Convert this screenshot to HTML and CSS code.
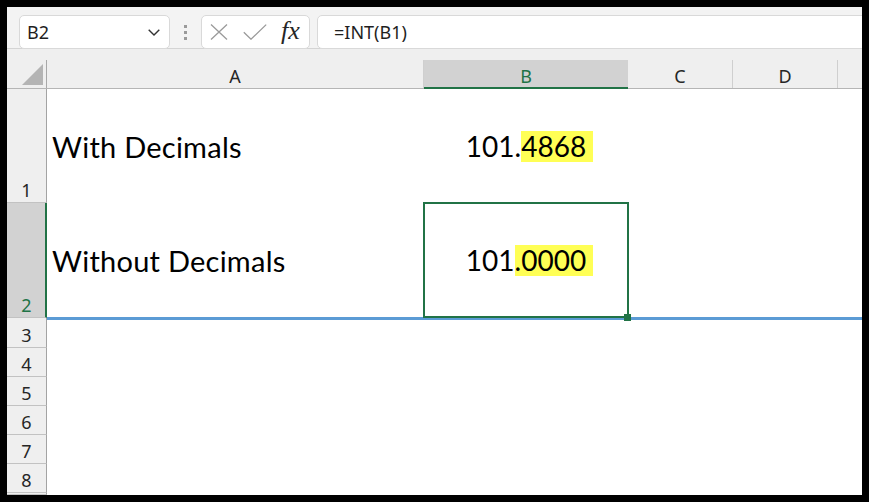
FILE: index.html
```html
<!DOCTYPE html>
<html>
<head>
<meta charset="utf-8">
<link rel="stylesheet" href="styles.css">
</head>
<body>
<div class="frame">
  <div class="toolbar">
    <div class="namebox">
      <span class="nb-text">B2</span>
      <svg class="chev" viewBox="0 0 12 7"><path d="M0.7 0.7 L6 6 L11.3 0.7" fill="none" stroke="#333" stroke-width="1.4"/></svg>
    </div>
    <div class="grip"><i></i><i></i><i></i></div>
    <div class="fxbox">
      <svg class="ic-x" viewBox="0 0 18 16"><path d="M1 0.5 L17 15.5 M17 0.5 L1 15.5" fill="none" stroke="#9a9a9a" stroke-width="1.3"/></svg>
      <svg class="ic-check" viewBox="0 0 24 16"><path d="M0.8 8.2 L8 15.2 L23.2 0.6" fill="none" stroke="#9a9a9a" stroke-width="1.3"/></svg>
      <span class="fx">fx</span>
    </div>
    <div class="formula">=INT(B1)</div>
  </div>
  <div class="colhead">
    <div class="corner"><svg class="tri" viewBox="0 0 21 21"><path d="M21 0 L21 21 L0 21 Z" fill="#b4b4b4"/></svg></div>
    <div class="ch">A</div>
    <div class="ch sel">B</div>
    <div class="ch">C</div>
    <div class="ch">D</div>
    <div class="ch last"></div>
  </div>
  <div class="grid">
    <div class="rh">1</div>
    <div class="cell txt">With Decimals</div>
    <div class="cell num">101.<span class="hl">4868</span></div>
    <div class="cell"></div>
    <div class="cell"></div>
    <div class="cell"></div>

    <div class="rh rsel">2</div>
    <div class="cell txt r2">Without Decimals</div>
    <div class="cell num r2 active">101<span class="hl">.0000</span></div>
    <div class="cell r2"></div>
    <div class="cell r2"></div>
    <div class="cell r2"></div>

    <div class="rh">3</div><div class="cell span5"></div>
    <div class="rh">4</div><div class="cell span5"></div>
    <div class="rh">5</div><div class="cell span5"></div>
    <div class="rh">6</div><div class="cell span5"></div>
    <div class="rh">7</div><div class="cell span5"></div>
    <div class="rh">8</div><div class="cell span5"></div>
    <div class="rh"></div><div class="cell span5"></div>
  </div>
</div>
</body>
</html>
```
FILE: styles.css
```css
* { box-sizing: border-box; margin: 0; padding: 0; }
html, body { background: #000; }
body { padding: 7px; width: 869px; height: 502px; overflow: hidden; }

.frame {
  width: 855px; height: 488px; background: #fff; overflow: hidden;
  display: flex; flex-direction: column;
  font-family: "Noto Sans", sans-serif;
}

/* formula bar */
.toolbar {
  flex: none; height: 42px; background: #f3f3f3;
  border-bottom: 1px solid #d4d4d4;
  display: flex; align-items: flex-start; padding: 8px 0 0 12px;
}
.namebox {
  width: 151px; height: 34px; background: #fff;
  border: 1px solid #d9d9d9; border-radius: 5px;
  display: flex; align-items: center; padding-left: 7px;
  font-size: 18px; color: #1f1f1f;
}
.nb-text { flex: 1; }
.chev { width: 12px; height: 7px; margin-right: 9px; }
.grip {
  width: 31px; height: 34px; display: flex; flex-direction: column;
  align-items: center; justify-content: center; gap: 3px;
}
.grip i { display: block; width: 3px; height: 3px; background: #9a9a9a; }
.fxbox {
  width: 109px; height: 34px; background: #fff;
  border: 1px solid #d9d9d9; border-radius: 5px;
  display: flex; align-items: center; padding-left: 8px;
}
.ic-x { width: 18px; height: 16px; }
.ic-check { width: 24px; height: 16px; margin-left: 15px; }
.fx {
  margin-left: 14px; font-family: "Liberation Serif", serif; font-style: italic;
  font-size: 26px; color: #262626; line-height: 1; margin-top: -2px;
}
.formula {
  flex: 1; height: 34px; margin-left: 7px; margin-right: -10px;
  background: #fff; border: 1px solid #d9d9d9; border-radius: 5px 0 0 5px;
  display: flex; align-items: center; padding-left: 16px;
  font-size: 18px; color: #1f1f1f;
}

/* column header */
.colhead {
  flex: none; height: 40px; background: #efefef;
  border-bottom: 1px solid #b5b5b5; padding-top: 11px;
  display: grid; grid-template-columns: 40px 377px 204px 105px 105px 1fr;
}
.corner {
  border-right: 1px solid #a8a8a8;
  display: flex; align-items: flex-end; justify-content: flex-end; padding: 0 3px 3px 0;
}
.tri { width: 21px; height: 21px; }
.ch {
  display: flex; align-items: center; justify-content: center;
  font-size: 18px; color: #262626; border-right: 1px solid #cfcfcf;
  padding-top: 3px;
}
.ch.sel {
  background: #d2d2d2; color: #217346; border-right: none;
  box-shadow: inset 0 -1px 0 #217346, 0 1px 0 #217346;
}
.ch.last { border-right: none; }

/* grid */
.grid {
  flex: 1; display: grid;
  grid-template-columns: 40px 377px 204px 105px 105px 1fr;
  grid-template-rows: 114px 115px 30px 29px 29px 29px 29px 29px 1fr;
}
.rh {
  background: #efefef; border-right: 1px solid #a3a3a3; border-bottom: 1px solid #c2c2c2;
  display: flex; align-items: flex-end; justify-content: center;
  font-size: 18px; line-height: 24px; color: #262626;
}
.rh.rsel { background: #d2d2d2; color: #217346; border-right: 2px solid #217346; padding-left: 1px; }
.cell {
  display: flex; align-items: center;
  font-family: Lato, "Noto Sans", sans-serif; font-size: 28px; color: #000;
}
.cell.txt { padding-left: 5px; font-size: 29px; letter-spacing: 0.25px; }
.cell.num { justify-content: center; }
.cell.r2 { border-bottom: 1px solid #5b9bd5; box-shadow: 0 2px 0 #5b9bd5; }
.span5 { grid-column: span 5; }
.hl { background: #ffff55; display: inline-block; line-height: 31px; height: 31px; padding-right: 7px; margin-right: -7px; }
.active { position: relative; }
.active::before {
  content: ""; position: absolute; left: -1px; right: -1px; top: -1px; bottom: -1px;
  border: 2px solid #217346; z-index: 2;
}
.active::after {
  content: ""; position: absolute; right: -3px; bottom: -4px; width: 7px; height: 7px;
  background: #217346; z-index: 3;
}
```
